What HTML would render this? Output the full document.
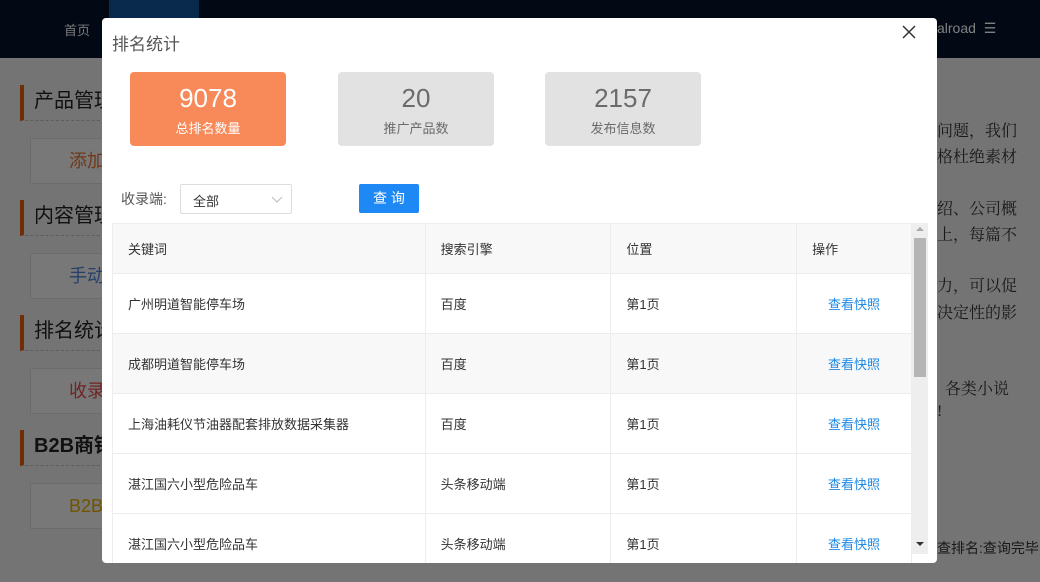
<!DOCTYPE html>
<html><head><meta charset="utf-8"><style>
*{margin:0;padding:0;box-sizing:border-box}
html,body{width:1040px;height:582px;overflow:hidden;background:#e8e8e8}
body{font-family:"Liberation Sans","Noto Sans CJK SC",sans-serif;position:relative}
.hdr{position:absolute;left:0;top:0;width:1040px;height:58px;background:#05122a}
.tab{position:absolute;left:109px;top:0;width:90px;height:58px;background:#14549a}
.abs{position:absolute}
.sec{position:absolute;left:20px;width:85px;height:36px;border-left:4px solid #e05a10;border-bottom:1px dashed #bbb;font-size:20px;color:#222;padding-left:10px;line-height:32px;white-space:nowrap;overflow:hidden}
.card{position:absolute;left:30px;width:80px;height:46px;border:1px solid #d8d8d8;background:#f0f0f0;font-size:18px;line-height:44px;padding-left:38px;white-space:nowrap;overflow:hidden}
.rt{position:absolute;left:937px;font-size:16px;color:#333;font-family:"Liberation Serif","Noto Serif CJK SC",serif;white-space:nowrap}
.modal{position:absolute;left:102px;top:18px;width:835px;height:545px;background:#fff;border-radius:4px;overflow:hidden;box-shadow:0 0 0 1200px rgba(0,0,0,0.5)}
.stat{position:absolute;top:54px;width:156px;height:74px;border-radius:4px;background:#e2e2e2;text-align:center;color:#6b6b6b}
.stat .n{font-size:26px;margin-top:10px;line-height:32px}
.stat .l{font-size:13px;margin-top:4px}
table{border-collapse:collapse;position:absolute;left:10px;top:205px;width:800px;font-size:13px;color:#333}
td{border:1px solid #ededed;height:60px;padding-left:15px}
tr.h td{background:#f8f8f8;height:50px}
tr.g td{background:#f8f8f8}
a{color:#1e88e5;text-decoration:none}
</style></head><body>
<div class="hdr"></div><div class="tab"></div>
<div class="abs" style="left:64px;top:20px;font-size:13px;color:#f0f0f0">首页</div>
<div class="abs" style="left:937px;top:20px;font-size:14px;color:#fff">alroad &nbsp;☰</div>
<div class="sec" style="top:85px">产品管理</div>
<div class="card" style="top:138px;color:#e07030">添加</div>
<div class="sec" style="top:200px">内容管理</div>
<div class="card" style="top:253px;color:#4a80d8">手动</div>
<div class="sec" style="top:315px">排名统计</div>
<div class="card" style="top:368px;color:#e04848">收录</div>
<div class="sec" style="top:430px;font-weight:bold">B2B商铺</div>
<div class="card" style="top:483px;color:#e0a800">B2B</div>
<div class="rt" style="top:118px">问题，我们</div>
<div class="rt" style="top:144px">格杜绝素材</div>
<div class="rt" style="top:196px">绍、公司概</div>
<div class="rt" style="top:222px">上，每篇不</div>
<div class="rt" style="top:273px">力，可以促</div>
<div class="rt" style="top:300px">决定性的影</div>
<div class="rt" style="top:376px">&nbsp;&nbsp;各类小说</div>
<div class="rt" style="top:403px">!</div>
<div class="rt" style="top:538px;font-size:14px;font-family:'Liberation Sans','Noto Sans CJK SC',sans-serif">查排名:查询完毕</div>
<div class="modal">
<div class="abs" style="left:10px;top:12px;font-size:17px;color:#555">排名统计</div>
<svg class="abs" style="left:799px;top:6px" width="16" height="16"><path d="M2 2L14 14M14 2L2 14" stroke="#333" stroke-width="1.5"/></svg>
<div class="stat" style="left:28px;background:#f88a5a;color:#fff"><div class="n">9078</div><div class="l">总排名数量</div></div>
<div class="stat" style="left:236px"><div class="n">20</div><div class="l">推广产品数</div></div>
<div class="stat" style="left:443px"><div class="n">2157</div><div class="l">发布信息数</div></div>
<div class="abs" style="left:19px;top:171px;font-size:14px;color:#555">收录端:</div>
<div class="abs" style="left:78px;top:166px;width:112px;height:30px;border:1px solid #ddd;border-radius:2px;font-size:13px;color:#333;padding:6px 0 0 12px">全部
<svg class="abs" style="left:90px;top:11px" width="12" height="8"><path d="M1 1L6 6L11 1" stroke="#bbb" fill="none"/></svg></div>
<div class="abs" style="left:257px;top:166px;width:60px;height:29px;background:#1e88f5;border-radius:2px;color:#fff;font-size:14px;text-align:center;line-height:29px">查 询</div>
<table>
<colgroup><col style="width:313px"><col style="width:186px"><col style="width:186px"><col style="width:115px"></colgroup>
<tr class="h"><td>关键词</td><td>搜索引擎</td><td>位置</td><td>操作</td></tr>
<tr><td>广州明道智能停车场</td><td>百度</td><td>第1页</td><td style="text-align:center;padding:0"><a>查看快照</a></td></tr>
<tr class="g"><td>成都明道智能停车场</td><td>百度</td><td>第1页</td><td style="text-align:center;padding:0"><a>查看快照</a></td></tr>
<tr><td>上海油耗仪节油器配套排放数据采集器</td><td>百度</td><td>第1页</td><td style="text-align:center;padding:0"><a>查看快照</a></td></tr>
<tr><td>湛江国六小型危险品车</td><td>头条移动端</td><td>第1页</td><td style="text-align:center;padding:0"><a>查看快照</a></td></tr>
<tr><td>湛江国六小型危险品车</td><td>头条移动端</td><td>第1页</td><td style="text-align:center;padding:0"><a>查看快照</a></td></tr>
</table>
<div class="abs" style="left:810px;top:205px;width:16px;height:331px;background:#eee"></div>
<div class="abs" style="left:812px;top:220px;width:12px;height:139px;background:#b5b5b5"></div>
<div class="abs" style="left:814px;top:209px;width:0;height:0;border:4px solid transparent;border-bottom-color:#aaa;border-top:0"></div>
<div class="abs" style="left:814px;top:524px;width:0;height:0;border:4px solid transparent;border-top-color:#333;border-bottom:0"></div>
</div>
</body></html>
